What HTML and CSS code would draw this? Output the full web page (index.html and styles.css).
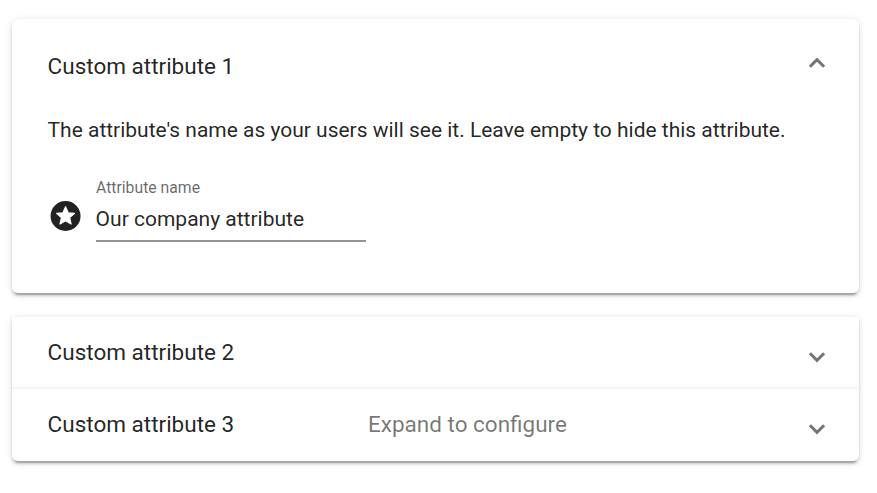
FILE: index.html
```html
<!DOCTYPE html>
<html lang="en">
<head>
<meta charset="utf-8">
<title>Custom attributes</title>
<link rel="stylesheet" href="styles.css">
</head>
<body>
<main class="accordion">
  <section class="panel-open">
    <header class="panel-header">
      <h2 class="title">Custom attribute 1</h2>
      <svg class="chevron" viewBox="0 0 18 12"><path d="M1.900 9.800 9 2.700 16.100 9.800"/></svg>
    </header>
    <div class="panel-body">
      <p class="hint">The attribute's name as your users will see it. Leave empty to hide this attribute.</p>
      <div class="field-row">
        <svg class="star" viewBox="0.300 0 24 24"><circle cx="12" cy="12" r="10"/><path class="star-shape" d="M15.700 17.350 12 15.200l-3.700 2.150.95-4.250-3.200-2.850 4.200-.4L12 5.900l1.750 3.950 4.200.4-3.200 2.850z"/></svg>
        <div class="field">
          <span class="label">Attribute name</span>
          <span class="value">Our company attribute</span>
        </div>
      </div>
    </div>
  </section>
  <div class="group">
    <section class="panel-header">
      <h2 class="title">Custom attribute 2</h2>
      <svg class="chevron" viewBox="0 0 18 12"><path d="M1.900 2.200 9 9.300 16.100 2.200"/></svg>
    </section>
    <section class="panel-header">
      <h2 class="title">Custom attribute 3</h2>
      <span class="description">Expand to configure</span>
      <svg class="chevron" viewBox="0 0 18 12"><path d="M1.900 2.200 9 9.300 16.100 2.200"/></svg>
    </section>
  </div>
</main>
</body>
</html>
```
FILE: styles.css
```css
* { box-sizing: border-box; }
body { margin: 0; background: #fff; color: rgba(0, 0, 0, .87); font-family: Roboto, sans-serif; }
.accordion { padding: 19px 18px 24px 12px; }
.panel-open, .group {
  background: #fff;
  border-radius: 6px;
  box-shadow: 0 4.500px 1.500px -3px rgba(0,0,0,.2), 0 3px 3px rgba(0,0,0,.14), 0 1.500px 7.500px rgba(0,0,0,.12);
}
.panel-open { height: 274px; margin-bottom: 24px; }
.group { border-radius: 0 0 6px 6px; }
.panel-header { display: flex; align-items: center; height: 72px; padding: 0 33px 2px 36px; }
.panel-open .panel-header { height: 96px; }
.group .panel-header:first-child { box-shadow: inset 0 -5px 5px -5px rgba(0,0,0,.1); }
.title { width: 320.400px; margin: 0 0 0 -.4px; font-size: 22.500px; line-height: 30px; font-weight: 400; }
.description { font-size: 22.500px; line-height: 30px; color: rgba(0,0,0,.54); }
.chevron { width: 18px; height: 12px; margin: 10px 0 0 auto; fill: none; stroke: #757575; stroke-width: 3; }
.panel-open .chevron { margin-top: -6px; }
.panel-body { padding: 0 36px; }
.hint { margin: 0 0 0 -.4px; font-size: 20.980px; line-height: 30px; white-space: nowrap; }
.field-row { display: flex; margin-top: 33px; }
.star { width: 36px; height: 36px; margin-top: 20px; fill: #212121; }
.star-shape { fill: #fff; stroke: #fff; stroke-width: .8; stroke-linejoin: round; }
.field { display: flex; flex-direction: column; width: 270px; height: 64px; margin-left: 12px; border-bottom: 2px solid #949494; }
.label { font-size: 15.750px; line-height: 20px; color: rgba(0,0,0,.6); }
.value { margin: 8px 0 0 -.4px; font-size: 21px; line-height: 27px; }
```
